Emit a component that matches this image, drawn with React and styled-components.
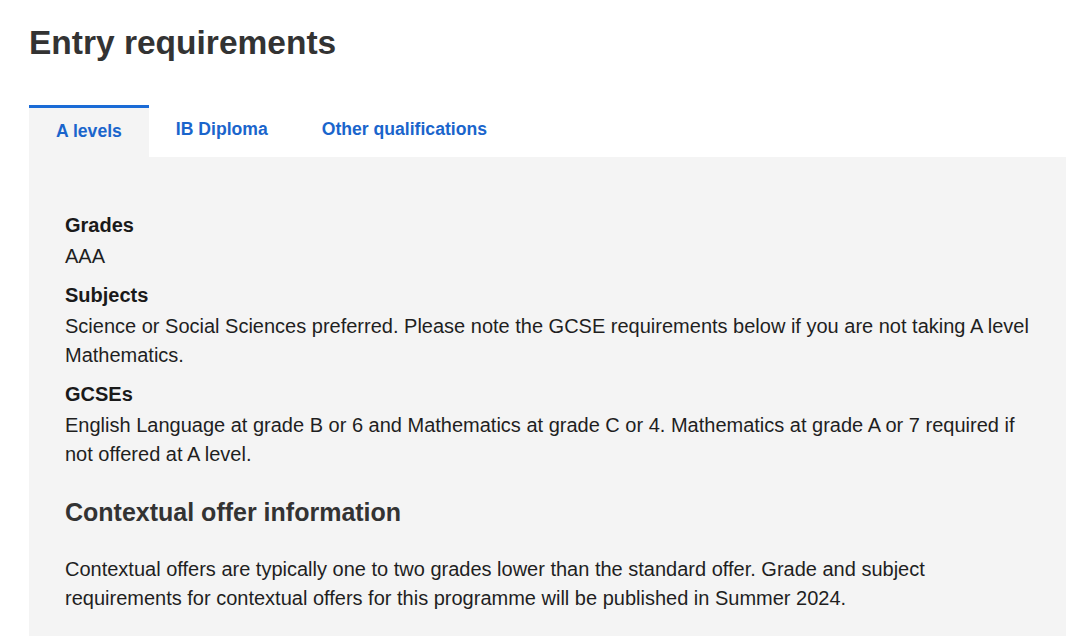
import React, { useState } from "react";
import styled, { createGlobalStyle } from "styled-components";

const GlobalStyle = createGlobalStyle`
  html, body {
    margin: 0;
    padding: 0;
    background: #ffffff;
  }
  body {
    font-family: "Liberation Sans", Arial, sans-serif;
    color: #222222;
  }
`;

const tabs = [
  { id: "alevels", label: "A levels" },
  { id: "ib", label: "IB Diploma" },
  { id: "other", label: "Other qualifications" },
];

const requirements = [
  { term: "Grades", text: "AAA" },
  {
    term: "Subjects",
    text: "Science or Social Sciences preferred. Please note the GCSE requirements below if you are not taking A level Mathematics.",
  },
  {
    term: "GCSEs",
    text: "English Language at grade B or 6 and Mathematics at grade C or 4. Mathematics at grade A or 7 required if not offered at A level.",
  },
];

export default function App() {
  const [active, setActive] = useState("alevels");

  return (
    <>
      <GlobalStyle />
      <Page>
        <Title>Entry requirements</Title>
        <TabList role="tablist">
          {tabs.map((tab) => (
            <Tab
              key={tab.id}
              role="tab"
              $active={active === tab.id}
              aria-selected={active === tab.id}
              onClick={() => setActive(tab.id)}
            >
              {tab.label}
            </Tab>
          ))}
        </TabList>
        <Panel role="tabpanel">
          <List>
            {requirements.map((r) => (
              <React.Fragment key={r.term}>
                <Term>{r.term}</Term>
                <Detail>{r.text}</Detail>
              </React.Fragment>
            ))}
          </List>
          <SubHeading>Contextual offer information</SubHeading>
          <Paragraph>
            Contextual offers are typically one to two grades lower than the
            standard offer. Grade and subject requirements for contextual
            offers for this programme will be published in Summer 2024.
          </Paragraph>
        </Panel>
      </Page>
    </>
  );
}

const Page = styled.main`
  padding: 0 14px 0 29px;
`;

const Title = styled.h1`
  margin: 0;
  padding-top: 23px;
  height: 105px;
  box-sizing: border-box;
  font-size: 33.5px;
  line-height: 40px;
  font-weight: 700;
  color: #333333;
`;

const TabList = styled.div`
  display: flex;
  align-items: flex-end;
  height: 52px;
`;

const Tab = styled.button`
  appearance: none;
  border: 0;
  border-top: ${(p) => (p.$active ? "3px solid #1a6bd6" : "0")};
  background: ${(p) => (p.$active ? "#f4f4f4" : "transparent")};
  padding: ${(p) => (p.$active ? "12px 27px 15px" : "13px 27px 17px")};
  font-family: "Liberation Sans", Arial, sans-serif;
  font-size: 17.6px;
  line-height: 22px;
  font-weight: 700;
  color: #1a65cc;
  cursor: pointer;
`;

const Panel = styled.section`
  background: #f4f4f4;
  padding: 54px 36px 40px;
`;

const List = styled.dl`
  margin: 0;
`;

const Term = styled.dt`
  font-size: 20px;
  line-height: 29px;
  font-weight: 700;
  color: #1a1a1a;
  margin-bottom: 2px;
`;

const Detail = styled.dd`
  margin: 0 0 10px;
  font-size: 20px;
  line-height: 29px;
  color: #1f1f1f;
`;

const SubHeading = styled.h2`
  margin: 27px 0 0;
  font-size: 25px;
  line-height: 32px;
  font-weight: 700;
  color: #333333;
`;

const Paragraph = styled.p`
  margin: 27px 0 0;
  font-size: 20px;
  line-height: 29px;
  color: #1f1f1f;
`;
